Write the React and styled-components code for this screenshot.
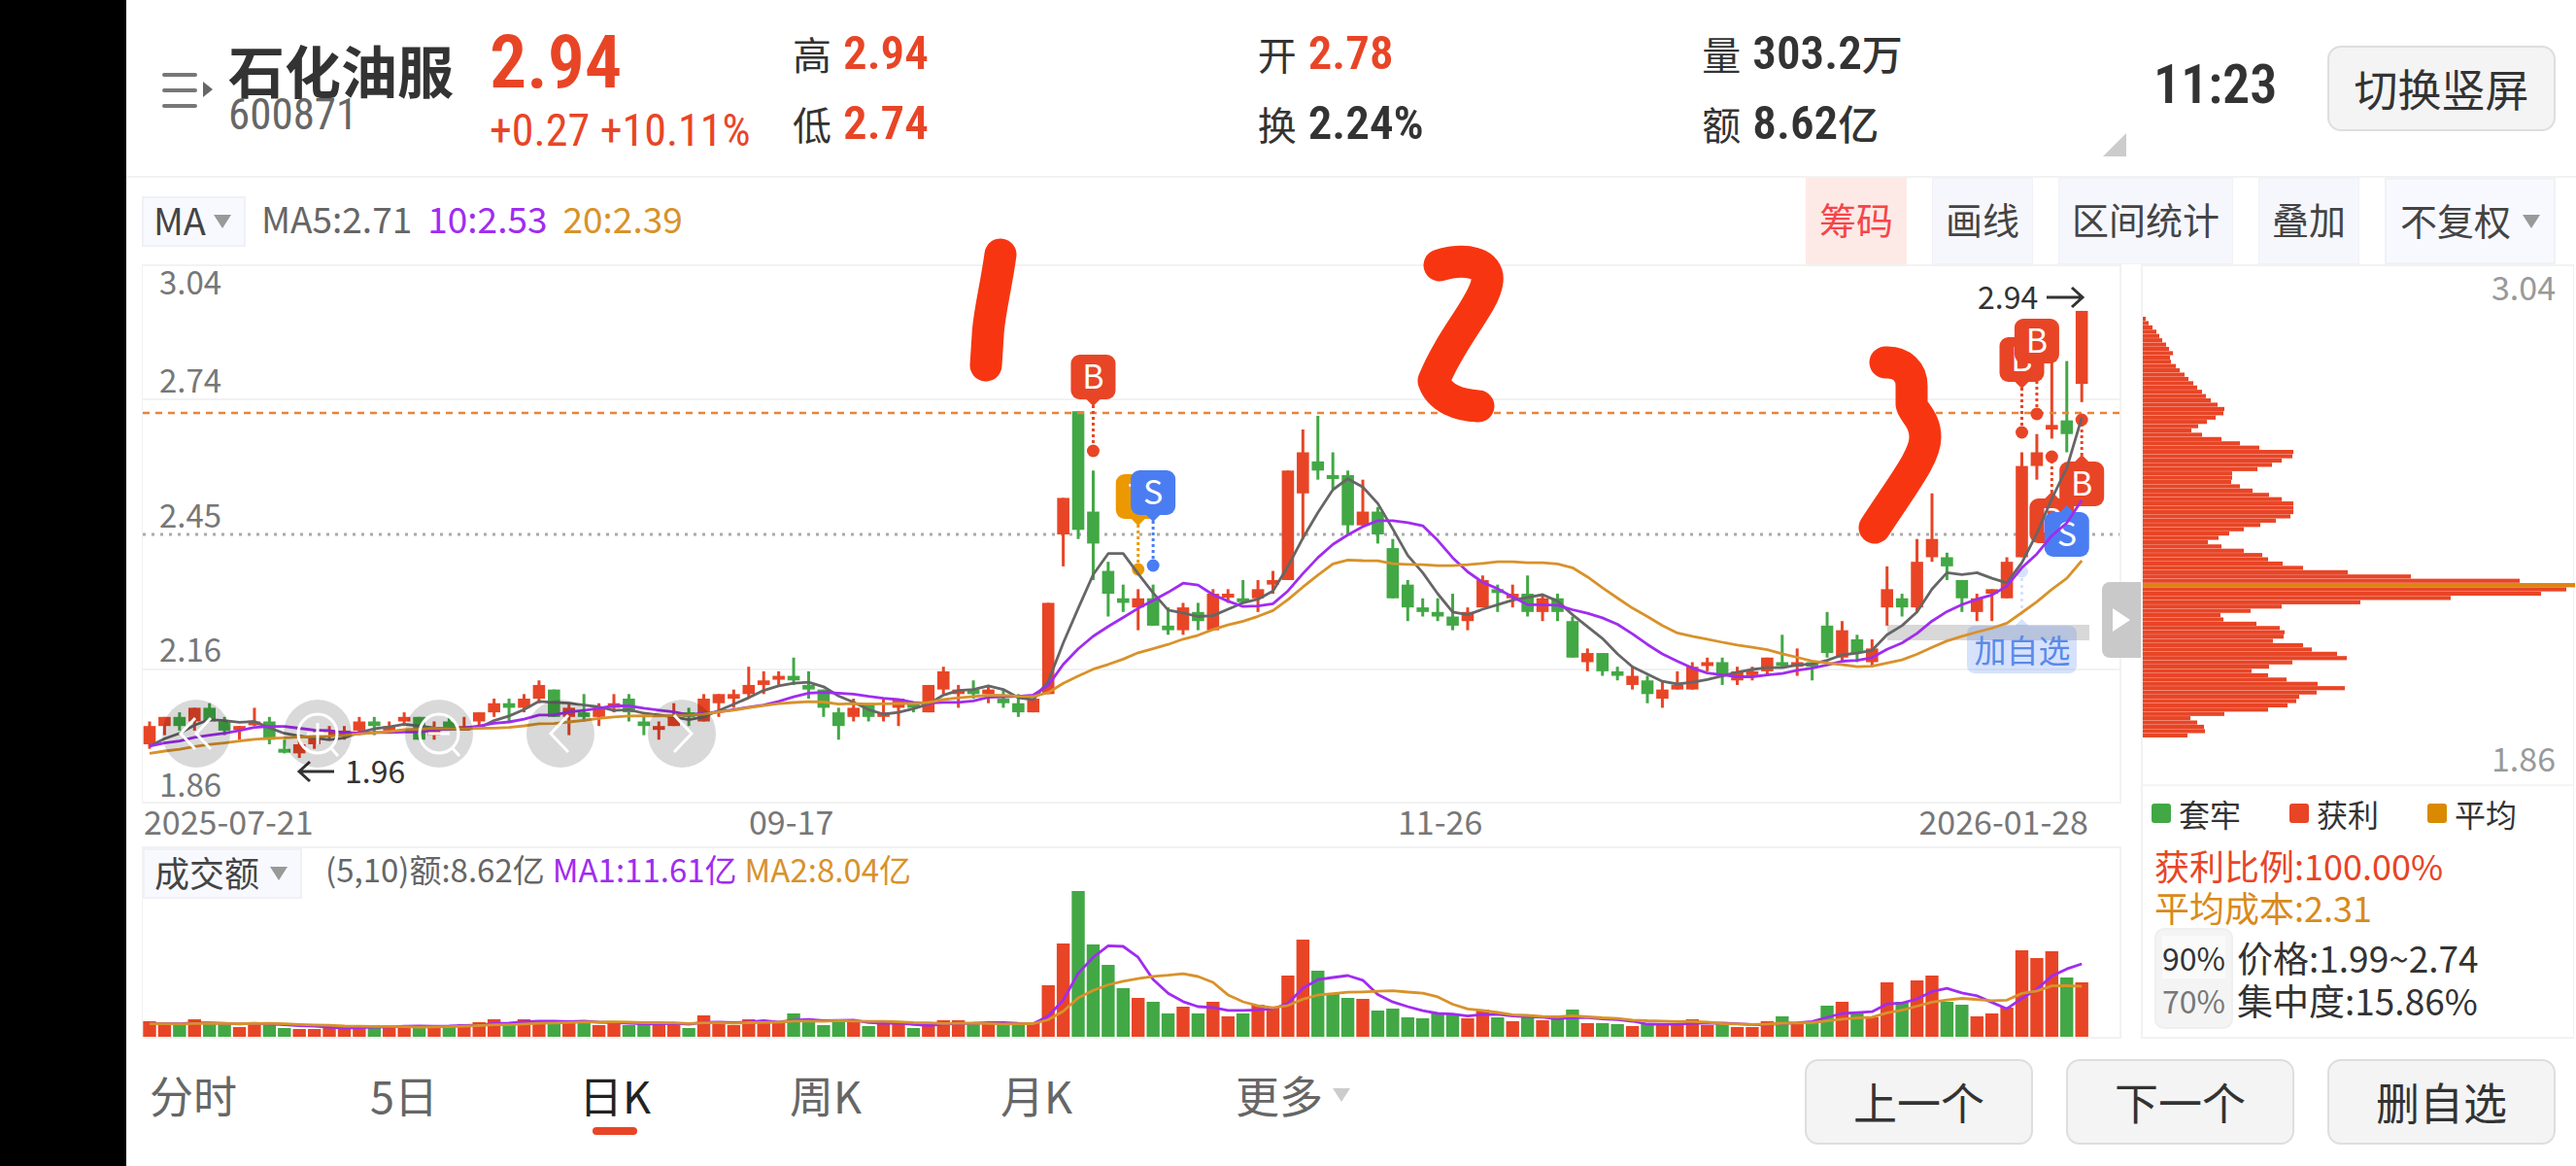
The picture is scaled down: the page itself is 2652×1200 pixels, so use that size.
import { useState } from "react";
import styled, { createGlobalStyle } from "styled-components";

const RED = "#e84526";
const GREEN = "#42a845";
const PURPLE = "#a02cf0";
const ORANGE = "#d8922a";
const BLUE = "#4b7df2";

const GlobalStyle = createGlobalStyle`
  * {
    box-sizing: border-box;
  }

  body {
    margin: 0;
    background: #fff;
    color: #333;
    font-family: "Noto Sans CJK SC", sans-serif;
  }

  button, select {
    margin: 0;
    padding: 0;
    border: none;
    background: none;
    color: inherit;
    font-family: inherit;
    cursor: pointer;
  }
`;

const Screen = styled.div`
  display: flex;
  min-height: 100vh;
`;

const Notch = styled.div`
  flex: 0 0 130px;
  background: #000;
`;

const Main = styled.main`
  flex: 1;
  min-width: 0;
`;

const Header = styled.header`
  display: flex;
  align-items: center;
  height: 183px;
  padding: 0 21px 0 36px;
  border-bottom: 2px solid #f2f2f2;
`;

const MenuButton = styled.button`
  display: flex;
  width: 69px;
`;

const NameBlock = styled.div`
  width: 269px;
`;

const Name = styled.h1`
  margin: 0;
  font-size: 58px;
  line-height: 54px;
  font-weight: 700;
  white-space: nowrap;
`;

const Digits = styled.span`
  font-family: "Roboto Condensed", "Noto Sans CJK SC", sans-serif;
  font-size: ${(props) => props.$size}px;
  line-height: ${(props) => props.$line}px;
  font-weight: ${(props) => (props.$bold ? 600 : 400)};
  color: ${(props) => props.$color || "#333"};
  display: block;
  white-space: nowrap;
`;

const PriceBlock = styled.div`
  width: 312px;
`;

const Stats = styled.dl`
  flex: 1;
  display: grid;
  grid-template-columns: 479fr 458fr 413fr;
  margin: 0;
`;

const Stat = styled.div`
  display: flex;
  align-items: center;
  gap: 12px;
  height: 72px;
  font-size: 40px;
  line-height: 68px;
`;

const StatValue = styled.dd`
  display: flex;
  margin: 0;
`;

const Unit = styled.span`
  font-size: 42px;
  font-weight: 500;
`;

const Corner = styled.svg`
  align-self: flex-end;
  margin-bottom: 20px;
`;

const Clock = styled.time`
  width: 207px;
  padding: 0 0 8px 28px;
`;

const PlainButton = styled.button`
  width: 235px;
  height: 88px;
  border: 2px solid #dedede;
  border-radius: 14px;
  background: #f4f4f4;
  font-size: 45px;
  line-height: 60px;
`;

const Toolbar = styled.div`
  display: flex;
  justify-content: space-between;
  height: 89px;
  padding: 0 21px 0 16px;
`;

const Legend = styled.div`
  display: flex;
  align-items: center;
  gap: 16px;
  font-size: 37px;
  line-height: 52px;
  color: #666;
  white-space: nowrap;
`;

const LegendValues = styled.div`
  display: flex;
  gap: 16px;
  padding-bottom: 8px;
`;

const Tinted = styled.span`
  color: ${(props) => props.$color};
`;

const Tools = styled.div`
  display: flex;
  gap: 26px;
`;

const Tool = styled.button`
  padding: 0 13px 6px;
  border: 1px solid ${(props) => (props.$active ? "#fdeae6" : "#f1f2f7")};
  background: ${(props) => (props.$active ? "#fdeae6" : "#f6f7fd")};
  color: ${(props) => (props.$active ? "#f5454a" : "#444")};
  font-size: 38px;
  line-height: 56px;
`;

const PickerBox = styled.label`
  display: flex;
  align-items: center;
  gap: ${(props) => props.$gap}px;
  height: ${(props) => (props.$tall ? "100%" : "52px")};
  padding: 0 ${(props) => (props.$tall ? 14 : 13)}px 0
    ${(props) => (props.$tall ? 14 : 10)}px;
  border: 2px solid #f0f1f5;
  background: #f8f9fe;
`;

const PickerSelect = styled.select`
  appearance: none;
  field-sizing: content;
  outline: none;
  padding-bottom: 4px;
  font-size: ${(props) => props.$size}px;
  line-height: 44px;
  color: #444;
`;

const Columns = styled.div`
  display: grid;
  grid-template-columns: minmax(0, 1fr) 446px;
  gap: 20px;
  padding: 0 2px 0 16px;
`;

const ChartFrame = styled.section`
  position: relative;
  border: solid #f2f2f2;
  border-width: 2px 2px 2px 1px;
`;

const Plot = styled.svg`
  display: block;
  width: 100%;
  height: auto;
  overflow: visible;
`;

const Scale = styled.div`
  position: absolute;
  inset: -4px 0 0;
  display: flex;
  flex-direction: column;
  padding-left: 17px;
  font-size: 33px;
  line-height: 38px;
  color: #777;
  pointer-events: none;
`;

const ScaleStep = styled.div`
  flex: 1;
  display: flex;
  flex-direction: column;
  justify-content: flex-end;
`;

const ScaleTop = styled.span`
  margin-bottom: auto;
`;

const Controls = styled.div`
  position: absolute;
  left: 20px;
  bottom: 35px;
  display: flex;
  gap: 55px;
`;

const RoundButton = styled.button`
  display: flex;
  width: 70px;
  height: 70px;
  border-radius: 50%;
  background: rgba(0, 0, 0, 0.15);
`;

const Handle = styled.button`
  position: absolute;
  right: -22px;
  top: 59%;
  width: 40px;
  height: 78px;
  display: flex;
  align-items: center;
  justify-content: center;
  border-radius: 8px 0 0 8px;
  background: #c9c9c9;
`;

const Dates = styled.div`
  display: grid;
  grid-template-columns: 623fr 668fr 711fr;
  padding: 0 34px 8px 2px;
  font-size: 34px;
  line-height: 36px;
  color: #777;
`;

const DateRange = styled.span`
  display: flex;
  justify-content: space-between;
`;

const VolumeFrame = styled.section`
  border: 2px solid #f2f2f2;
  border-left-width: 1px;
`;

const VolumeHead = styled.div`
  display: flex;
  align-items: flex-start;
  gap: 24px;
`;

const VolumeLegend = styled.div`
  display: flex;
  gap: 8px;
  font-size: 33px;
  line-height: 42px;
  color: #666;
  white-space: nowrap;
`;

const Chips = styled.aside`
  display: flex;
  flex-direction: column;
  border: solid #f2f2f2;
  border-width: 2px 1px 2px 2px;
`;

const ChipsPlot = styled.div`
  position: relative;
  height: 535px;
  border-bottom: 2px solid #f5f5f5;
`;

const ChipsScale = styled.div`
  position: absolute;
  inset: 0;
  display: flex;
  flex-direction: column;
  justify-content: space-between;
  align-items: flex-end;
  padding: 0 18px 6px 0;
  font-size: 34px;
  line-height: 42px;
  color: #999;
`;

const Keys = styled.ul`
  display: flex;
  gap: 50px;
  margin: 0;
  padding: 6px 0 10px 9px;
  list-style: none;
  font-size: 32px;
  line-height: 44px;
`;

const Key = styled.li`
  display: flex;
  align-items: center;
  gap: 8px;
  white-space: nowrap;

  &::before {
    content: "";
    width: 20px;
    height: 20px;
    border-radius: 3px;
    background: ${(props) => props.$color};
  }
`;

const ChipLine = styled.p`
  margin: 0;
  padding-left: 12px;
  font-size: 36px;
  line-height: 43px;
  color: ${(props) => props.$color};
`;

const Concentration = styled.div`
  display: flex;
  align-items: center;
  gap: 4px;
  padding: 0 0 8px 12px;
  font-size: 37px;
  line-height: 44px;
`;

const Ranges = styled.div`
  display: flex;
  flex-direction: column;
  padding: 6px 6px;
  border: 2px solid #efefef;
  border-radius: 10px;
  background: #f4f4f4;
`;

const RangeButton = styled.button`
  height: 44px;
  font-size: 32px;
  line-height: 44px;
  color: ${(props) => (props.$active ? "#333" : "#777")};
  background: ${(props) => (props.$active ? "#fafafa" : "transparent")};
`;

const Footer = styled.footer`
  display: flex;
  align-items: center;
  justify-content: space-between;
  padding: 21px 21px 20px 24px;
`;

const Tabs = styled.nav`
  display: flex;
  gap: 127px;
`;

const Tab = styled.button`
  min-width: 90px;
  height: 88px;
  padding-bottom: 14px;
  font-size: 45px;
  line-height: 60px;
  white-space: nowrap;
  color: ${(props) => (props.$active ? "#222" : "#666")};
`;

const MoreTab = styled(Tab)`
  display: flex;
  align-items: center;
  gap: 10px;
  margin-left: 33px;
`;

const TabLabel = styled.span`
  position: relative;
  display: inline-block;

  &::after {
    content: "";
    display: ${(props) => (props.$active ? "block" : "none")};
    position: absolute;
    left: 50%;
    bottom: -11px;
    width: 46px;
    height: 8px;
    margin-left: -23px;
    border-radius: 4px;
    background: ${RED};
  }
`;

const Actions = styled.div`
  display: flex;
  gap: 34px;
`;

// side, high, body top, body bottom, low (prices in cents)
const candles = [
  ["r", 204, 203, 199, 198], ["r", 205, 205, 203, 201], ["g", 206, 205, 203, 202],
  ["r", 207, 207, 204, 202], ["g", 208, 207, 204, 204], ["g", 205, 204, 202, 201],
  ["r", 203, 203, 203, 200], ["r", 207, 204, 204, 203], ["g", 205, 204, 200, 199],
  ["g", 200, 198, 198, 197], ["r", 200, 199, 197, 196], ["r", 202, 201, 199, 198],
  ["r", 203, 202, 201, 200], ["r", 203, 202, 201, 200], ["r", 205, 204, 202, 201],
  ["g", 205, 204, 203, 201], ["r", 204, 203, 202, 202], ["r", 206, 205, 204, 203],
  ["g", 205, 205, 200, 200], ["r", 204, 202, 201, 200], ["g", 205, 204, 202, 202],
  ["r", 205, 203, 202, 202], ["r", 206, 206, 204, 203], ["r", 209, 208, 206, 205],
  ["g", 209, 208, 207, 204], ["r", 210, 209, 207, 206], ["r", 213, 212, 209, 208],
  ["g", 211, 211, 205, 205], ["r", 208, 207, 205, 201], ["g", 210, 206, 205, 204],
  ["r", 208, 207, 205, 203], ["r", 210, 208, 207, 206], ["g", 210, 209, 206, 204],
  ["g", 205, 204, 203, 201], ["r", 204, 203, 203, 200], ["r", 208, 205, 203, 203],
  ["g", 207, 206, 205, 203], ["r", 210, 209, 204, 204], ["r", 210, 210, 208, 205],
  ["r", 211, 210, 209, 207], ["r", 216, 212, 210, 209], ["r", 215, 213, 212, 210],
  ["r", 215, 214, 214, 212], ["g", 218, 214, 213, 212], ["g", 215, 212, 211, 209],
  ["g", 211, 211, 207, 205], ["g", 207, 206, 203, 200], ["r", 209, 207, 205, 204],
  ["g", 208, 208, 205, 204], ["r", 209, 206, 205, 204], ["r", 209, 209, 207, 203],
  ["g", 208, 208, 207, 206], ["r", 212, 212, 206, 206], ["r", 216, 215, 211, 210],
  ["r", 212, 211, 210, 207], ["g", 213, 211, 210, 209], ["r", 212, 211, 210, 208],
  ["g", 211, 209, 208, 207], ["g", 210, 208, 206, 205], ["r", 209, 209, 206, 206],
  ["r", 230, 230, 210, 210], ["r", 253, 253, 245, 238], ["g", 272, 272, 246, 244],
  ["g", 259, 250, 243, 235], ["g", 239, 237, 232, 227], ["g", 234, 231, 230, 228],
  ["r", 233, 231, 229, 224], ["g", 234, 231, 225, 225], ["g", 229, 225, 224, 223],
  ["r", 230, 229, 224, 223], ["g", 230, 228, 226, 224], ["r", 233, 232, 224, 224],
  ["r", 233, 232, 232, 230], ["g", 235, 231, 231, 230], ["r", 235, 233, 231, 228],
  ["r", 237, 235, 234, 232], ["r", 259, 259, 235, 235], ["r", 268, 263, 254, 244],
  ["g", 271, 261, 259, 257], ["g", 263, 258, 258, 255], ["g", 259, 258, 247, 245],
  ["r", 257, 250, 247, 247], ["g", 251, 250, 245, 243], ["g", 244, 242, 231, 231],
  ["g", 235, 234, 229, 226], ["g", 231, 229, 228, 227], ["g", 231, 228, 227, 226],
  ["g", 232, 227, 225, 224], ["r", 229, 228, 226, 224], ["r", 236, 235, 229, 229],
  ["g", 234, 233, 233, 228], ["r", 234, 232, 231, 229], ["g", 236, 232, 228, 227],
  ["r", 232, 231, 228, 226], ["g", 232, 231, 228, 226], ["g", 227, 226, 218, 218],
  ["r", 220, 219, 217, 215], ["g", 219, 219, 215, 214], ["g", 216, 215, 214, 213],
  ["r", 216, 214, 212, 211], ["g", 214, 213, 210, 208], ["r", 213, 211, 209, 207],
  ["r", 215, 212, 211, 211], ["r", 217, 216, 211, 211], ["r", 218, 217, 217, 215],
  ["g", 218, 217, 214, 212], ["r", 216, 215, 213, 212], ["r", 216, 215, 215, 213],
  ["r", 218, 218, 215, 214], ["g", 223, 217, 217, 216], ["r", 220, 217, 216, 214],
  ["g", 217, 217, 216, 213], ["g", 228, 225, 219, 218], ["r", 226, 224, 218, 217],
  ["g", 223, 222, 219, 217], ["r", 222, 220, 217, 216], ["r", 238, 233, 229, 225],
  ["g", 232, 231, 229, 227], ["r", 244, 239, 229, 228], ["r", 254, 244, 240, 239],
  ["g", 241, 240, 238, 235], ["g", 235, 235, 231, 228], ["r", 232, 231, 228, 226],
  ["r", 233, 233, 232, 226], ["r", 240, 239, 231, 231], ["r", 263, 260, 240, 240],
  ["r", 267, 263, 260, 257], ["r", 283, 269, 268, 266], ["g", 283, 270, 267, 263],
  ["r", 294, 294, 278, 274],
];

const volumes = [
  16, 13, 12, 18, 13, 13, 10, 15, 15, 9, 8, 8, 9, 10, 12, 10, 10, 12, 11, 11,
  11, 13, 15, 18, 13, 18, 16, 15, 16, 16, 12, 14, 12, 13, 15, 15, 9, 22, 15, 12,
  18, 16, 15, 24, 16, 12, 17, 17, 11, 13, 13, 9, 12, 17, 17, 14, 13, 12, 13, 15,
  53, 96, 150, 95, 74, 50, 40, 36, 24, 31, 24, 36, 21, 24, 33, 30, 63, 100, 68, 44,
  40, 39, 27, 29, 20, 19, 25, 24, 19, 28, 20, 16, 20, 17, 19, 28, 14, 14, 13, 11,
  13, 13, 14, 18, 12, 13, 10, 10, 16, 21, 15, 16, 32, 36, 25, 20, 56, 36, 58, 63,
  36, 33, 21, 24, 30, 89, 81, 88, 61, 56,
];

// bar lengths of the cost distribution, from the highest price down
const chips = [
  3, 6, 10, 14, 17, 20, 24, 27, 31, 28, 29, 34, 38, 43, 47, 52, 56, 61, 65, 70,
  77, 84, 83, 75, 66, 57, 50, 61, 81, 100, 120, 155, 154, 143, 133, 118, 92, 92,
  91, 100, 113, 130, 143, 155, 155, 155, 152, 137, 121, 104, 89, 78, 67, 81, 104,
  123, 129, 144, 165, 211, 276, 388, 445, 436, 410, 317, 224, 143, 111, 80, 83,
  117, 141, 146, 145, 134, 165, 174, 200, 210, 154, 130, 112, 129, 148, 180, 208,
  179, 161, 158, 149, 129, 84, 49, 56, 63, 64, 46,
];
const AVERAGE_ROW = 62;

// closes before the first visible day, needed by the moving averages
const earlierCloses = [
  195, 195, 195, 195, 195, 195, 196, 196, 196, 196, 198, 199, 199, 199, 198, 197,
  197, 198, 198,
];
const closes = [
  ...earlierCloses,
  ...candles.map(([side, , top, bottom]) => (side === "r" ? top : bottom)),
];
const allVolumes = [...Array(19).fill(13), ...volumes];

const cx = (i) => 8 + i * 15.42;
const priceY = (cents) => (304 - cents) * 4.695;
const volumeY = (v) => 142 - v;

const averageLine = (values, days, toY) =>
  candles
    .map((_, i) => {
      const end = i + 20;
      const sum = values.slice(end - days, end).reduce((a, b) => a + b, 0);
      return `${cx(i).toFixed(1)},${toY(sum / days).toFixed(1)}`;
    })
    .join(" ");

const sideColor = (side) => (side === "r" ? RED : GREEN);

const trades = [
  { day: 63, box: 92, dot: 191, text: "B", color: RED },
  { day: 66, box: 215, dot: 313, text: "T", color: "#ec9800" },
  { day: 67, box: 211, dot: 309, text: "S", color: BLUE },
  { day: 125, box: 74, dot: 172, text: "B", color: RED },
  { day: 126, box: 55, dot: 153, text: "B", color: RED },
  { day: 127, box: 240, dot: 197, text: "B", color: RED },
  { day: 129, box: 202, dot: 159, text: "B", color: RED },
  { day: 128, box: 254, text: "S", color: BLUE },
];

const Trade = ({ day, box, dot, text, color }) => {
  const x = cx(day);
  const below = dot === undefined || dot < box;
  const edge = below ? box : box + 46;
  const tip = below ? box - 7 : box + 53;
  return (
    <g fill={color}>
      {dot !== undefined && (
        <>
          <line x1={x} y1={edge} x2={x} y2={dot} stroke={color} strokeWidth="3" strokeDasharray="3 3" />
          <circle cx={x} cy={dot} r="6.5" />
        </>
      )}
      <path d={`M${x - 7} ${edge}L${x} ${tip}L${x + 7} ${edge}Z`} />
      <rect x={x - 23} y={box} width="46" height="46" rx="9" />
      <text x={x} y={box + 35} fill="#fff" fontSize="34" textAnchor="middle">
        {text}
      </text>
    </g>
  );
};

const Caret = ({ color = "#999" }) => (
  <svg width="18" height="14" viewBox="0 0 18 14" aria-hidden="true">
    <path d="M0 0H18L9 14Z" fill={color} />
  </svg>
);

const Picker = ({ label, options, size, gap, tall }) => (
  <PickerBox $gap={gap} $tall={tall}>
    <PickerSelect aria-label={label} $size={size}>
      {options.map((option) => (
        <option key={option}>{option}</option>
      ))}
    </PickerSelect>
    <Caret />
  </PickerBox>
);

const ControlIcon = ({ children }) => (
  <svg width="70" height="70" viewBox="0 0 70 70" fill="none" stroke="#fff" strokeWidth="3">
    {children}
  </svg>
);

const PriceChart = () => (
  <ChartFrame>
    <Plot viewBox="1 1 2035 551">
      <g stroke="#f2f2f2" strokeWidth="2">
        <line x1="1" y1="138" x2="2036" y2="138" />
        <line x1="1" y1="416" x2="2036" y2="416" />
      </g>
      <line x1="1" y1="277" x2="2036" y2="277" stroke="#aaa" strokeWidth="3" strokeDasharray="3 6" />
      <rect x="1797" y="370" width="208" height="16" fill="#d8d8d8" />

      {candles.map(([side, high, top, bottom, low], i) => {
        const height = Math.max((top - bottom) * 4.695, 4);
        return (
          <g key={i} fill={sideColor(side)}>
            <rect x={cx(i) - 1.5} y={priceY(high)} width="3" height={priceY(low) - priceY(high)} />
            <rect x={cx(i) - 6.3} y={priceY(top)} width="12.6" height={height} />
          </g>
        );
      })}

      <line x1="1" y1="152" x2="2036" y2="152" stroke="#e8843c" strokeWidth="2.4" strokeDasharray="7 6" />

      <g opacity="0.22" fill={BLUE}>
        <circle cx={cx(125)} cy="315" r="6.5" />
        <line x1={cx(125)} y1="322" x2={cx(125)} y2="364" stroke={BLUE} strokeWidth="3" strokeDasharray="3 4" />
        <path d={`M${cx(125) - 7} 371L${cx(125)} 364L${cx(125) + 7} 371Z`} />
        <rect x="1879" y="371" width="113" height="49" rx="8" />
      </g>
      <text x="1936" y="409" fill="#5a8aea" fontSize="33" textAnchor="middle">
        加自选
      </text>

      {trades.map((trade) => (
        <Trade key={trade.day} {...trade} />
      ))}

      <g fill="none" strokeWidth="2.8" strokeLinejoin="round">
        <polyline points={averageLine(closes, 5, priceY)} stroke="#666" />
        <polyline points={averageLine(closes, 10, priceY)} stroke={PURPLE} />
        <polyline points={averageLine(closes, 20, priceY)} stroke={ORANGE} />
      </g>

      <g fill="#333" fontSize="32">
        <text x="209" y="533">1.96</text>
        <text x="1890" y="45">2.94</text>
      </g>
      <g fill="none" stroke="#333" strokeWidth="3">
        <path d="M198 521H163M173 511L162 521L173 531" />
        <path d="M1961 33H1997M1987 23L1998 33L1987 43" />
      </g>

      <g fill="none" stroke="#f73611" strokeWidth="33" strokeLinecap="round" strokeLinejoin="round">
        <path d="M884 -11C879 25 872 50 871 72L869 103" />
        <path d="M1336 0C1362 -8 1388 -3 1385 17C1382 40 1348 74 1330 119C1336 137 1356 144 1376 145" />
        <path d="M1795 100C1812 99 1822 110 1822 124V143C1823 151 1836 158 1836 177C1836 197 1814 224 1784 270" />
      </g>
    </Plot>

    <Scale>
      <ScaleStep>
        <ScaleTop>3.04</ScaleTop>
        <span>2.74</span>
      </ScaleStep>
      <ScaleStep>2.45</ScaleStep>
      <ScaleStep>2.16</ScaleStep>
      <ScaleStep>1.86</ScaleStep>
    </Scale>

    <Controls>
      <RoundButton aria-label="最早">
        <ControlIcon>
          <path d="M34 19L19 35L34 51M50 19L35 35L50 51" />
        </ControlIcon>
      </RoundButton>
      <RoundButton aria-label="放大">
        <ControlIcon>
          <circle cx="35" cy="35" r="20" />
          <path d="M48 49L56 58M35 24V46M24 35H46" />
        </ControlIcon>
      </RoundButton>
      <RoundButton aria-label="缩小">
        <ControlIcon>
          <circle cx="35" cy="35" r="20" />
          <path d="M48 49L56 58M24 35H46" />
        </ControlIcon>
      </RoundButton>
      <RoundButton aria-label="向前">
        <ControlIcon>
          <path d="M43 16L25 35L43 54" />
        </ControlIcon>
      </RoundButton>
      <RoundButton aria-label="向后">
        <ControlIcon>
          <path d="M27 16L45 35L27 54" />
        </ControlIcon>
      </RoundButton>
    </Controls>

    <Handle aria-label="收起筹码">
      <svg width="18" height="24" viewBox="0 0 18 24">
        <path d="M0 0L18 12L0 24Z" fill="#fff" />
      </svg>
    </Handle>
  </ChartFrame>
);

const VolumeChart = () => (
  <VolumeFrame>
    <VolumeHead>
      <Picker label="副图指标" options={["成交额", "成交量", "MACD"]} size={36} gap={11} />
      <VolumeLegend>
        <span>(5,10)额:8.62亿</span>
        <Tinted $color={PURPLE}>MA1:11.61亿</Tinted>
        <Tinted $color={ORANGE}>MA2:8.04亿</Tinted>
      </VolumeLegend>
    </VolumeHead>
    <Plot viewBox="1 0 2035 142">
      {volumes.map((v, i) => (
        <rect key={i} x={cx(i) - 6.7} y={142 - v} width="13.4" height={v} fill={sideColor(candles[i][0])} />
      ))}
      <g fill="none" strokeWidth="2.8" strokeLinejoin="round">
        <polyline points={averageLine(allVolumes, 5, volumeY)} stroke={PURPLE} />
        <polyline points={averageLine(allVolumes, 10, volumeY)} stroke={ORANGE} />
      </g>
    </Plot>
  </VolumeFrame>
);

const ChipsPanel = () => {
  const [range, setRange] = useState("90%");

  return (
    <Chips>
      <ChipsPlot>
        <Plot viewBox="0 0 443 533">
          {chips.map((length, i) => (
            <rect
              key={i}
              x="0"
              y={52 + i * 4.42}
              width={length}
              height={i === AVERAGE_ROW ? 4.4 : 4.2}
              fill={i === AVERAGE_ROW ? "#dc8411" : RED}
            />
          ))}
        </Plot>
        <ChipsScale>
          <span>3.04</span>
          <span>1.86</span>
        </ChipsScale>
      </ChipsPlot>
      <Keys>
        <Key $color={GREEN}>套牢</Key>
        <Key $color={RED}>获利</Key>
        <Key $color="#d98a00">平均</Key>
      </Keys>
      <ChipLine $color={RED}>获利比例:100.00%</ChipLine>
      <ChipLine $color="#d98a1a">平均成本:2.31</ChipLine>
      <Concentration>
        <Ranges>
          {["90%", "70%"].map((item) => (
            <RangeButton key={item} $active={item === range} onClick={() => setRange(item)}>
              {item}
            </RangeButton>
          ))}
        </Ranges>
        <div>
          <div>价格:1.99~2.74</div>
          <div>集中度:15.86%</div>
        </div>
      </Concentration>
    </Chips>
  );
};

const stats = [
  { label: "高", value: "2.94", color: RED },
  { label: "开", value: "2.78", color: RED },
  { label: "量", value: "303.2", unit: "万" },
  { label: "低", value: "2.74", color: RED },
  { label: "换", value: "2.24%" },
  { label: "额", value: "8.62", unit: "亿" },
];

const periods = ["分时", "5日", "日K", "周K", "月K"];

const App = () => {
  const [period, setPeriod] = useState("日K");

  return (
    <Screen>
      <GlobalStyle />
      <Notch />
      <Main>
        <Header>
          <MenuButton aria-label="自选列表">
            <svg width="56" height="40" viewBox="0 0 56 40">
              <path d="M3 6H35M3 22H35M3 38H35" stroke="#777" strokeWidth="4" strokeLinecap="round" />
              <path d="M43 13L53 21L43 29Z" fill="#666" />
            </svg>
          </MenuButton>
          <NameBlock>
            <Name>石化油服</Name>
            <Digits $size={45} $line={40} $color="#666">
              600871
            </Digits>
          </NameBlock>
          <PriceBlock>
            <Digits $size={76} $line={86} $color={RED} $bold>
              2.94
            </Digits>
            <Digits $size={46} $line={54} $color={RED}>
              +0.27 +10.11%
            </Digits>
          </PriceBlock>
          <Stats>
            {stats.map(({ label, value, unit, color }) => (
              <Stat key={label}>
                <dt>{label}</dt>
                <StatValue>
                  <Digits as="span" $size={49} $line={70} $color={color} $bold>
                    {value}
                  </Digits>
                  {unit && <Unit>{unit}</Unit>}
                </StatValue>
              </Stat>
            ))}
          </Stats>
          <Corner width="24" height="24" viewBox="0 0 24 24">
            <path d="M24 0V24H0Z" fill="#ccc" />
          </Corner>
          <Clock>
            <Digits $size={56} $line={78} $bold>
              11:23
            </Digits>
          </Clock>
          <PlainButton>切换竖屏</PlainButton>
        </Header>

        <Toolbar>
          <Legend>
            <Picker label="主图指标" options={["MA", "BOLL"]} size={38} gap={8} />
            <LegendValues>
              <span>MA5:2.71</span>
              <Tinted $color={PURPLE}>10:2.53</Tinted>
              <Tinted $color={ORANGE}>20:2.39</Tinted>
            </LegendValues>
          </Legend>
          <Tools>
            <Tool $active>筹码</Tool>
            <Tool>画线</Tool>
            <Tool>区间统计</Tool>
            <Tool>叠加</Tool>
            <Picker label="复权方式" options={["不复权", "前复权", "后复权"]} size={38} gap={12} tall />
          </Tools>
        </Toolbar>

        <Columns>
          <div>
            <PriceChart />
            <Dates>
              <span>2025-07-21</span>
              <span>09-17</span>
              <DateRange>
                <span>11-26</span>
                <span>2026-01-28</span>
              </DateRange>
            </Dates>
            <VolumeChart />
          </div>
          <ChipsPanel />
        </Columns>

        <Footer>
          <Tabs>
            {periods.map((item) => (
              <Tab key={item} $active={item === period} onClick={() => setPeriod(item)}>
                <TabLabel $active={item === period}>{item}</TabLabel>
              </Tab>
            ))}
            <MoreTab>
              更多
              <Caret color="#ccc" />
            </MoreTab>
          </Tabs>
          <Actions>
            <PlainButton>上一个</PlainButton>
            <PlainButton>下一个</PlainButton>
            <PlainButton>删自选</PlainButton>
          </Actions>
        </Footer>
      </Main>
    </Screen>
  );
};

export default App;
